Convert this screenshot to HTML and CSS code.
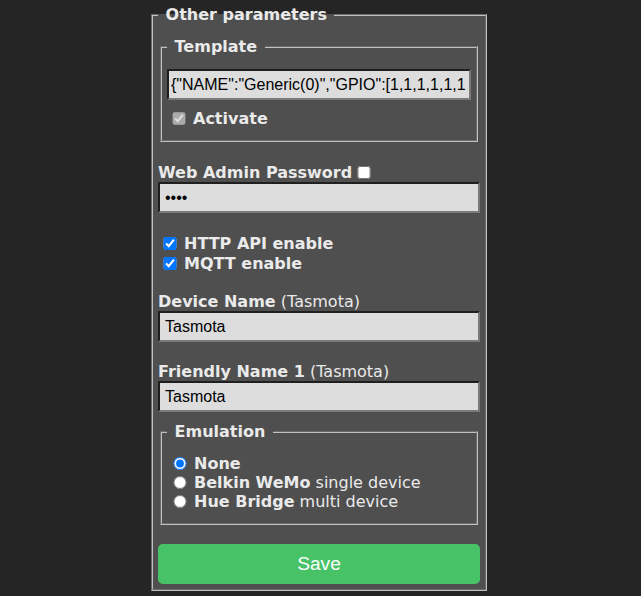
FILE: index.html
```html
<!DOCTYPE html>
<html>
<head>
    <title>Configure Other</title>
    <link rel="stylesheet" href="styles.css">
</head>
<body>
    <div class="main">
        <fieldset>
            <legend>&nbsp;Other parameters&nbsp;</legend>
            <form class="config">
                <!-- Template -->
                <fieldset class="template">
                    <legend>&nbsp;Template&nbsp;</legend>
                    <input class="text" type="text" value='{"NAME":"Generic(0)","GPIO":[1,1,1,1,1,1,1,1,1,1,1,1,1,1],"FLAG":0,"BASE":18}'>
                    <label class="check activate"><input type="checkbox" checked disabled><b>Activate</b></label>
                </fieldset>

                <div class="password">
                    <label class="check"><b>Web Admin Password</b><input type="checkbox" class="show"></label>
                    <input class="text" type="password" value="****">
                </div>

                <div class="options">
                    <label class="check"><input type="checkbox" checked><b>HTTP API enable</b></label>
                    <label class="check"><input type="checkbox" checked><b>MQTT enable</b></label>
                </div>

                <div class="field device">
                    <label class="head"><b>Device Name</b> (Tasmota)</label>
                    <input class="text" type="text" value="Tasmota">
                </div>

                <div class="field friendly">
                    <label class="head"><b>Friendly Name 1</b> (Tasmota)</label>
                    <input class="text" type="text" value="Tasmota">
                </div>

                <!-- Emulation -->
                <fieldset class="emulation">
                    <legend>&nbsp;Emulation&nbsp;</legend>
                    <div class="radios">
                        <label class="radio"><input type="radio" name="emu" checked><b>None</b></label>
                        <label class="radio"><input type="radio" name="emu"><b>Belkin WeMo</b>&nbsp;single device</label>
                        <label class="radio"><input type="radio" name="emu"><b>Hue Bridge</b>&nbsp;multi device</label>
                    </div>
                </fieldset>

                <button type="button" class="save">Save</button>
            </form>
        </fieldset>
    </div>
</body>
</html>
```

FILE: styles.css
```css
body {
    font-family: Verdana, "DejaVu Sans", sans-serif;
    font-size: 16px;
    background-color: #252525;
    margin: 0;
    text-align: center;
}

.main {
    display: inline-block;
    width: 340px;
    margin-right: 3px; /* the original sits a little left of center */
    padding-top: 5px;
    text-align: left;
    color: #eaeaea;
}

fieldset {
    margin: 0 2px;
    padding: 5px;
    border: 2px groove #c0c0c0;
    background-color: #4f4f4f;
}

legend {
    padding: 0 2px;
    line-height: 19px;
    font-weight: bold;
}

.template {
    margin-top: 8px;
}

.text {
    display: block;
    width: 100%;
    height: 31px;
    box-sizing: border-box;
    padding: 5px;
    border: 2px solid;
    border-color: #1f1f1f #7a7a7a #7a7a7a #1f1f1f;
    background-color: #dddddd;
    color: #000;
    font-family: "Liberation Sans", Arial, sans-serif;
    font-size: 16px;
}

.template .text {
    margin-top: 8px;
    padding: 5px 2px; /* long template string runs closer to the edges */
}

/* checkbox and radio rows */
.check, .radio {
    display: flex;
    align-items: center;
    white-space: nowrap;
}

.check {
    height: 20px;
}

.radio {
    height: 19px;
}

.check input {
    width: 16px;
    height: 13px;
    margin: 0 6px 0 4px;
}

.check .show {
    margin: 0 0 0 4px;
}

.radio input {
    width: 16px;
    height: 13px;
    margin: 0 6px 0 5px;
}

.activate {
    margin: 8px 0 7px;
}

.password {
    margin-top: 20px;
}

.options {
    margin-top: 20px;
}

.head {
    display: block;
    line-height: 18px;
}

.device {
    margin-top: 20px;
}

.friendly {
    margin-top: 21px;
}

.emulation {
    margin-top: 10px;
}

.radios {
    padding: 8px 0 7px;
}

.save {
    display: block;
    width: 100%;
    height: 40px;
    margin-top: 19px;
    border: 0;
    border-radius: 0.3rem;
    background-color: #47c266;
    color: #faffff;
    font-family: "Liberation Sans", Arial, sans-serif;
    font-size: 1.2rem;
    cursor: pointer;
}

.save:hover {
    background-color: #5aaf6f;
}
```
